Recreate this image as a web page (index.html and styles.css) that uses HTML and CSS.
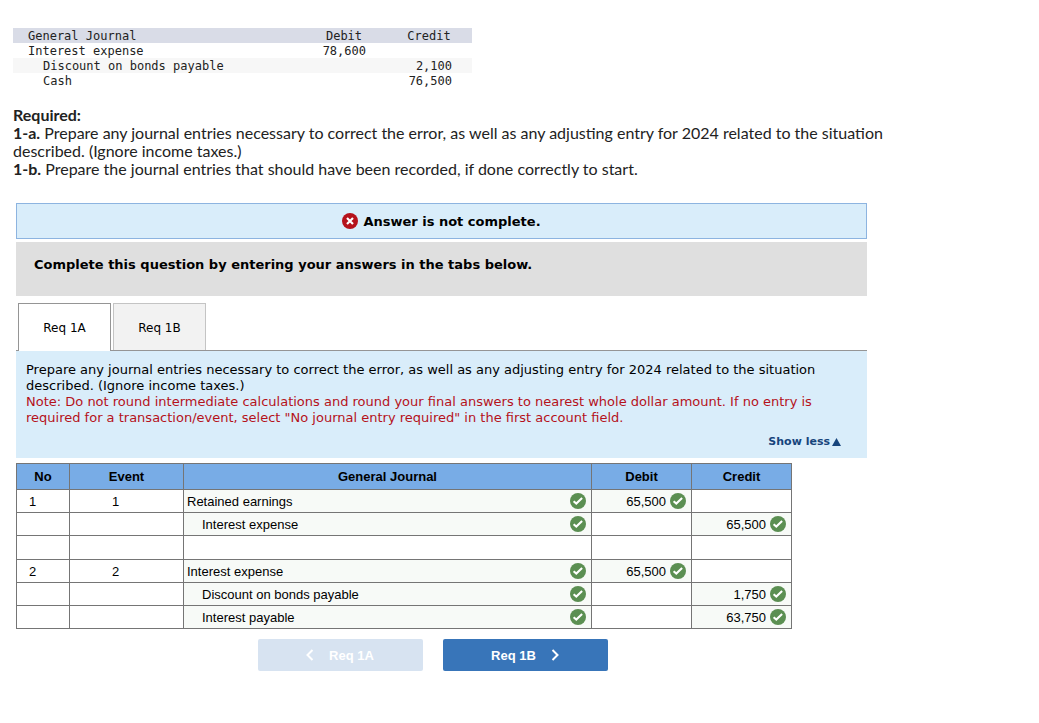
FILE: index.html
```html
<!DOCTYPE html>
<html lang="en">
<head>
  <meta charset="UTF-8">
  <meta name="viewport" content="width=device-width, initial-scale=1.0">
  <title>Journal entries</title>
  <link rel="stylesheet" href="styles.css">
</head>
<body>
  <svg class="symbols" aria-hidden="true">
    <symbol id="check" viewBox="0 0 16 16">
      <circle cx="8" cy="8" r="8" fill="#5b8f52"/>
      <path d="M3.600 8.200l2.700 2.300 5.800-5.400" fill="none" stroke="#fff" stroke-width="2.100"/>
    </symbol>
  </svg>

  <main>
    <!-- Entry as it was recorded -->
    <table class="recorded">
      <colgroup>
        <col><col class="col-debit"><col class="col-credit">
      </colgroup>
      <thead>
        <tr><th class="account">General Journal</th><th>Debit</th><th>Credit</th></tr>
      </thead>
      <tbody>
        <tr><td>Interest expense</td><td class="num">78,600</td><td></td></tr>
        <tr class="shade"><td class="indent">Discount on bonds payable</td><td></td><td class="num">2,100</td></tr>
        <tr><td class="indent">Cash</td><td></td><td class="num">76,500</td></tr>
      </tbody>
    </table>

    <div class="required">
      <p><b>Required:</b></p>
      <p><b>1-a.</b> Prepare any journal entries necessary to correct the error, as well as any adjusting entry for 2024 related to the situation described. (Ignore income taxes.)</p>
      <p><b>1-b.</b> Prepare the journal entries that should have been recorded, if done correctly to start.</p>
    </div>

    <section class="question">
      <div class="status">
        <svg class="icon" viewBox="0 0 16 16" aria-hidden="true">
          <circle cx="8" cy="8" r="8" fill="#b5121b"/>
          <path d="M5 5l6 6M11 5l-6 6" stroke="#fff" stroke-width="2.2"/>
        </svg>
        <span>Answer is not complete.</span>
      </div>
      <div class="prompt">Complete this question by entering your answers in the tabs below.</div>

      <div class="tabs" role="tablist">
        <button type="button" class="tab active" role="tab" aria-selected="true">Req 1A</button>
        <button type="button" class="tab" role="tab" aria-selected="false">Req 1B</button>
      </div>

      <div class="instructions">
        <p>Prepare any journal entries necessary to correct the error, as well as any adjusting entry for 2024 related to the situation described. (Ignore income taxes.)</p>
        <p class="note">Note: Do not round intermediate calculations and round your final answers to nearest whole dollar amount. If no entry is required for a transaction/event, select "No journal entry required" in the first account field.</p>
        <a href="#" class="toggle">Show less<svg viewBox="0 0 9 8" aria-hidden="true"><path d="M4.5 0L9 8H0z" fill="#17457c"/></svg></a>
      </div>

      <table class="journal">
        <colgroup>
          <col class="col-no"><col class="col-event"><col class="col-account"><col class="col-amount"><col class="col-amount">
        </colgroup>
        <thead>
          <tr><th>No</th><th>Event</th><th>General Journal</th><th>Debit</th><th>Credit</th></tr>
        </thead>
        <tbody>
          <tr>
            <td class="no">1</td>
            <td class="event">1</td>
            <td class="ok"><div class="cell"><span>Retained earnings</span><svg class="icon"><use href="#check"/></svg></div></td>
            <td class="ok"><div class="cell amount"><span>65,500</span><svg class="icon"><use href="#check"/></svg></div></td>
            <td></td>
          </tr>
          <tr>
            <td></td>
            <td></td>
            <td class="ok"><div class="cell credit"><span>Interest expense</span><svg class="icon"><use href="#check"/></svg></div></td>
            <td></td>
            <td class="ok"><div class="cell amount"><span>65,500</span><svg class="icon"><use href="#check"/></svg></div></td>
          </tr>
          <tr class="spacer">
            <td></td><td></td><td></td><td></td><td></td>
          </tr>
          <tr>
            <td class="no">2</td>
            <td class="event">2</td>
            <td class="ok"><div class="cell"><span>Interest expense</span><svg class="icon"><use href="#check"/></svg></div></td>
            <td class="ok"><div class="cell amount"><span>65,500</span><svg class="icon"><use href="#check"/></svg></div></td>
            <td></td>
          </tr>
          <tr>
            <td></td>
            <td></td>
            <td class="ok"><div class="cell credit"><span>Discount on bonds payable</span><svg class="icon"><use href="#check"/></svg></div></td>
            <td></td>
            <td class="ok"><div class="cell amount"><span>1,750</span><svg class="icon"><use href="#check"/></svg></div></td>
          </tr>
          <tr>
            <td></td>
            <td></td>
            <td class="ok"><div class="cell credit"><span>Interest payable</span><svg class="icon"><use href="#check"/></svg></div></td>
            <td></td>
            <td class="ok"><div class="cell amount"><span>63,750</span><svg class="icon"><use href="#check"/></svg></div></td>
          </tr>
        </tbody>
      </table>

      <div class="pager">
        <button type="button" class="page-btn" disabled>
          <svg viewBox="0 0 8 12" aria-hidden="true"><path d="M6.500 1L1.500 6l5 5" fill="none" stroke="#fff" stroke-width="2"/></svg>
          Req 1A
        </button>
        <button type="button" class="page-btn">
          Req 1B
          <svg viewBox="0 0 8 12" aria-hidden="true"><path d="M1.500 1l5 5-5 5" fill="none" stroke="#fff" stroke-width="2"/></svg>
        </button>
      </div>
    </section>
  </main>
</body>
</html>
```

FILE: styles.css
```css
* {
  box-sizing: border-box;
}
body {
  margin: 0;
  background: #fff;
  color: #000;
  font-family: "Liberation Sans", Arial, sans-serif;
  font-size: 13px;
}
main {
  padding: 28px 13px;
}
p {
  margin: 0;
}
button {
  font: inherit;
  cursor: pointer;
}
.symbols {
  display: none;
}
.icon {
  flex: none;
  width: 16px;
  height: 16px;
}

/* recorded entry */
.recorded {
  width: 100%;
  max-width: 459px;
  border-collapse: collapse;
  table-layout: fixed;
  font-family: "DejaVu Sans Mono", monospace;
  font-size: 12px;
  line-height: 14px;
  color: #222;
}
.col-debit {
  width: 84px;
}
.col-credit {
  width: 86px;
}
.recorded th,
.recorded td {
  padding: 1px 20px 0;
}
.recorded th {
  background: #d9dce7;
  font-weight: normal;
}
.recorded .account {
  text-align: left;
}
.recorded .account,
.recorded td:first-child {
  padding-left: 15px;
}
.recorded .num {
  text-align: right;
}
.recorded td.indent {
  padding-left: 30px;
}
.shade {
  background: #f7f7f7;
}

.required {
  max-width: 880px;
  margin-top: 18px;
  font-family: Lato, sans-serif;
  font-size: 16px;
  line-height: 18px;
  color: #222;
}

/* question */
.question {
  max-width: 851px;
  margin: 25px 3px 0;
}
.status {
  display: flex;
  align-items: center;
  justify-content: center;
  gap: 5px;
  height: 36px;
  border: 1px solid #8db4e0;
  background: #d9edfa;
}
.status,
.prompt {
  font-family: Verdana, "DejaVu Sans", sans-serif;
  font-weight: bold;
}
.prompt {
  margin-top: 3px;
  padding: 14px 18px 22px;
  background: #dfdfdf;
  line-height: 18px;
}
.tabs {
  display: flex;
  gap: 2px;
  margin-top: 7px;
  padding-left: 2px;
  border-bottom: 1px solid #959595;
}
.tab {
  width: 93px;
  height: 47px;
  padding: 2px 0 0;
  border: 1px solid #c4c4c4;
  border-bottom: 0;
  background: #f2f2f2;
  color: #000;
  font-family: Verdana, "DejaVu Sans", sans-serif;
  font-size: 12px;
}
.tab.active {
  height: 48px;
  margin-bottom: -1px;
  padding-bottom: 1px;
  border-color: #959595;
  background: #fff;
}
.instructions {
  padding: 11px 26px 8px 10px;
  background: #d9edfa;
  font-family: Verdana, "DejaVu Sans", sans-serif;
  line-height: 16px;
}
.note {
  color: #b5121b;
}
.toggle {
  display: flex;
  align-items: center;
  justify-content: flex-end;
  gap: 2px;
  margin-top: 8px;
  color: #17457c;
  font-size: 11px;
  font-weight: bold;
  text-decoration: none;
}
.toggle svg {
  width: 9px;
  height: 8px;
}

/* journal */
.journal {
  width: 100%;
  max-width: 776px;
  margin-top: 5px;
  border-collapse: collapse;
  table-layout: fixed;
}
.col-no {
  width: 53px;
}
.col-event {
  width: 114px;
}
.col-amount {
  width: 100px;
}
.journal th,
.journal td {
  height: 23px;
  padding: 0;
  border: 1px solid #757575;
}
.journal th {
  height: 26px;
  background: #78ace6;
}
.journal .spacer td {
  height: 24px;
}
.journal .no {
  padding-left: 12px;
}
.journal .event {
  padding-right: 22px;
  text-align: center;
}
.ok {
  background: #f7faf7;
}
.cell {
  display: flex;
  align-items: center;
  justify-content: space-between;
  gap: 4px;
  padding: 0 5px 0 3px;
}
.cell.credit {
  padding-left: 18px;
}
.cell.amount {
  justify-content: flex-end;
}

.pager {
  display: flex;
  justify-content: center;
  gap: 20px;
  margin-top: 10px;
  padding-right: 18px;
}
.page-btn {
  display: flex;
  align-items: center;
  justify-content: center;
  gap: 15px;
  width: 165px;
  height: 32px;
  border: 0;
  border-radius: 2px;
  background: #3875b9;
  color: #fff;
  font-weight: bold;
}
.page-btn:disabled {
  background: #d7e3f1;
  cursor: default;
}
.page-btn svg {
  width: 8px;
  height: 12px;
}
```
